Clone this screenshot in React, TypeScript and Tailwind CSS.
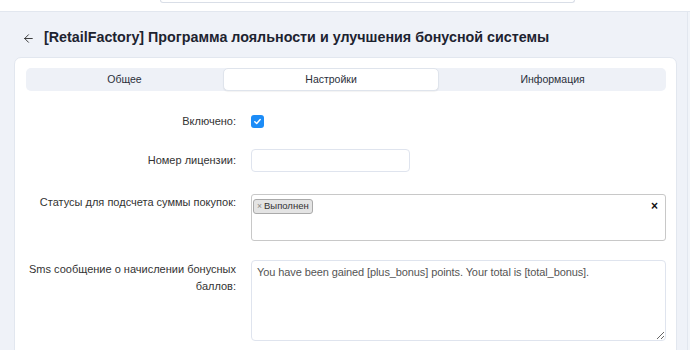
import { ArrowLeft } from 'lucide-react';

const tabs = ['Общее', 'Настройки', 'Информация'];

function Row({ label, children, center = false, top = 'mt-0', pad = '' }: { label: React.ReactNode; children: React.ReactNode; center?: boolean; top?: string; pad?: string }) {
  return (
    <div className={`flex ${center ? 'items-center' : 'items-start'} ${top}`}>
      <div className={`w-[210px] shrink-0 text-right text-[11px] leading-[17px] text-[#333] whitespace-nowrap ${pad}`}>
        {label}
      </div>
      <div className="ml-[15px] flex-1">{children}</div>
    </div>
  );
}

export default function App() {
  return (
    <div className="w-[690px] h-[350px] overflow-hidden bg-[#eff2f8] flex flex-col" style={{ fontFamily: '"Liberation Sans", Arial, sans-serif' }}>
      {/* top bar with the bottom of the search box */}
      <div className="h-[12px] shrink-0 bg-white border-b border-[#e2e7ef]">
        <div className="ml-[160px] w-[415px] h-[3px] border-x border-b border-[#d9dee7] rounded-b-[4px]" />
      </div>

      <div className="flex flex-1 min-h-0">
        <div className="flex-1 min-w-0">
          {/* header */}
          <div className="h-[45px] flex items-center pl-[22px] pt-[7px]">
            <ArrowLeft size={13} strokeWidth={1.6} className="text-[#222]" />
            <h1 className="ml-[9px] text-[14.3px] font-bold text-[#1d2330]">
              [RetailFactory] Программа лояльности и улучшения бонусной системы
            </h1>
          </div>

          {/* card */}
          <div className="ml-[14px] w-[663px] h-[400px] bg-white border border-[#e2e7ef] rounded-[7px] pl-[11px] pr-[10px] pt-[10px]">
            <div className="flex h-[23px] bg-[#eef1f7] rounded-[5px]">
              {tabs.map((t) => (
                <div
                  key={t}
                  className={`flex-auto flex items-center justify-center text-[10.5px] text-[#2a2f3a] rounded-[5px] ${t === 'Настройки' ? 'bg-white border border-[#dfe4ec] shadow-[0_1px_1px_rgba(0,0,0,0.05)]' : ''}`}
                >
                  {t}
                </div>
              ))}
            </div>

            <div className="flex flex-col">
              <Row label="Включено:" center top="mt-[22px]">
                <div className="w-[13px] h-[13px] rounded-[3px] bg-[#1c8cf7] flex items-center justify-center">
                  <svg width="9" height="9" viewBox="0 0 10 10" fill="none">
                    <path d="M2 5.2 L4.1 7.2 L8 2.8" stroke="white" strokeWidth="1.6" strokeLinecap="round" strokeLinejoin="round" />
                  </svg>
                </div>
              </Row>

              <Row label="Номер лицензии:" center top="mt-[19px]">
                <div className="w-[159px] h-[23px] border border-[#dfe4ee] rounded-[4px] bg-white" />
              </Row>

              <Row label="Статусы для подсчета суммы покупок:" top="mt-[22px]">
                <div className="w-[415px] h-[47px] border border-[#c8c8c8] rounded-[3px] bg-white flex items-start justify-between pl-[1px] pt-[4px] pr-[7px]">
                  <span className="flex items-center h-[15px] px-[3px] bg-[#e4e4e4] border border-[#aaa] rounded-[3px] text-[9.5px] text-[#333]">
                    <span className="text-[#888] mr-[2px] text-[8.5px]">×</span>Выполнен
                  </span>
                  <span className="text-[12px] font-bold text-[#111] leading-[14px]">×</span>
                </div>
              </Row>

              <Row label={<>Sms сообщение о начислении бонусных<br />баллов:</>} top="mt-[19px]" pad="pt-[1px]">
                <textarea
                  readOnly
                  defaultValue="You have been gained [plus_bonus] points. Your total is [total_bonus]."
                  className="block w-[415px] h-[81px] border border-[#dfe4ee] rounded-[4px] bg-white px-[5px] pt-[3px] text-[11px] tracking-[-0.1px] leading-[16px] text-[#555] outline-none resize-y"
                  style={{ fontFamily: '"Liberation Sans", Arial, sans-serif' }}
                />
              </Row>
            </div>
          </div>
        </div>
        {/* sliver of the neighbouring panel */}
        <div className="w-[3px] shrink-0 border-l border-[#e2e7ef] bg-[#f1f4f9]" />
      </div>
    </div>
  );
}
